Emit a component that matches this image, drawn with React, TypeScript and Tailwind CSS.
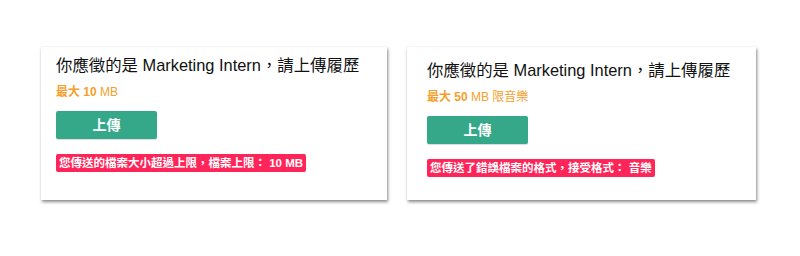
import React from 'react';

type UploadCardProps = {
  jobTitle: string;
  limit: React.ReactNode;
  error: string;
  className: string;
};

const font = { fontFamily: '"Liberation Sans", "Noto Sans CJK TC", sans-serif' };

const UploadCard: React.FC<UploadCardProps> = ({ jobTitle, limit, error, className }) => (
  <div
    className={`flex h-[153px] flex-col bg-white shadow-[1px_2px_3px_rgba(0,0,0,0.45),0_0_1px_rgba(0,0,0,0.12)] ${className}`}
  >
    <h2 className="text-[16.4px] leading-[20px] text-[#111]">你應徵的是 {jobTitle}，請上傳履歷</h2>
    <p className="mt-[10px] text-[12px] leading-[14px] text-[#f5a02a]">{limit}</p>
    <button
      type="button"
      className="mt-[12px] h-[28px] w-[101px] rounded-[2px] bg-[#36a88a] text-[14px] font-bold text-white shadow-[0_1px_1px_rgba(0,0,0,0.15)]"
    >
      上傳
    </button>
    <div className="mt-[11px]">
      <span className="inline-block rounded-[2px] bg-[#ff2559] px-[3px] text-[11.5px] font-bold leading-[18px] text-white">
        {error}
      </span>
    </div>
  </div>
);

export default function App() {
  return (
    <div className="h-[256px] w-[800px] bg-white" style={font}>
      <div className="flex gap-[20px] pl-[41px] pt-[47px]">
        <UploadCard
          className="w-[346px] pl-[15px] pt-[8px]"
          jobTitle="Marketing Intern"
          limit={
            <>
              <span className="font-bold">最大 10</span> MB
            </>
          }
          error="您傳送的檔案大小超過上限，檔案上限： 10 MB"
        />
        <UploadCard
          className="w-[349px] pl-[20px] pt-[13px]"
          jobTitle="Marketing Intern"
          limit={
            <>
              <span className="font-bold">最大 50</span> MB 限音樂
            </>
          }
          error="您傳送了錯誤檔案的格式，接受格式： 音樂"
        />
      </div>
    </div>
  );
}
